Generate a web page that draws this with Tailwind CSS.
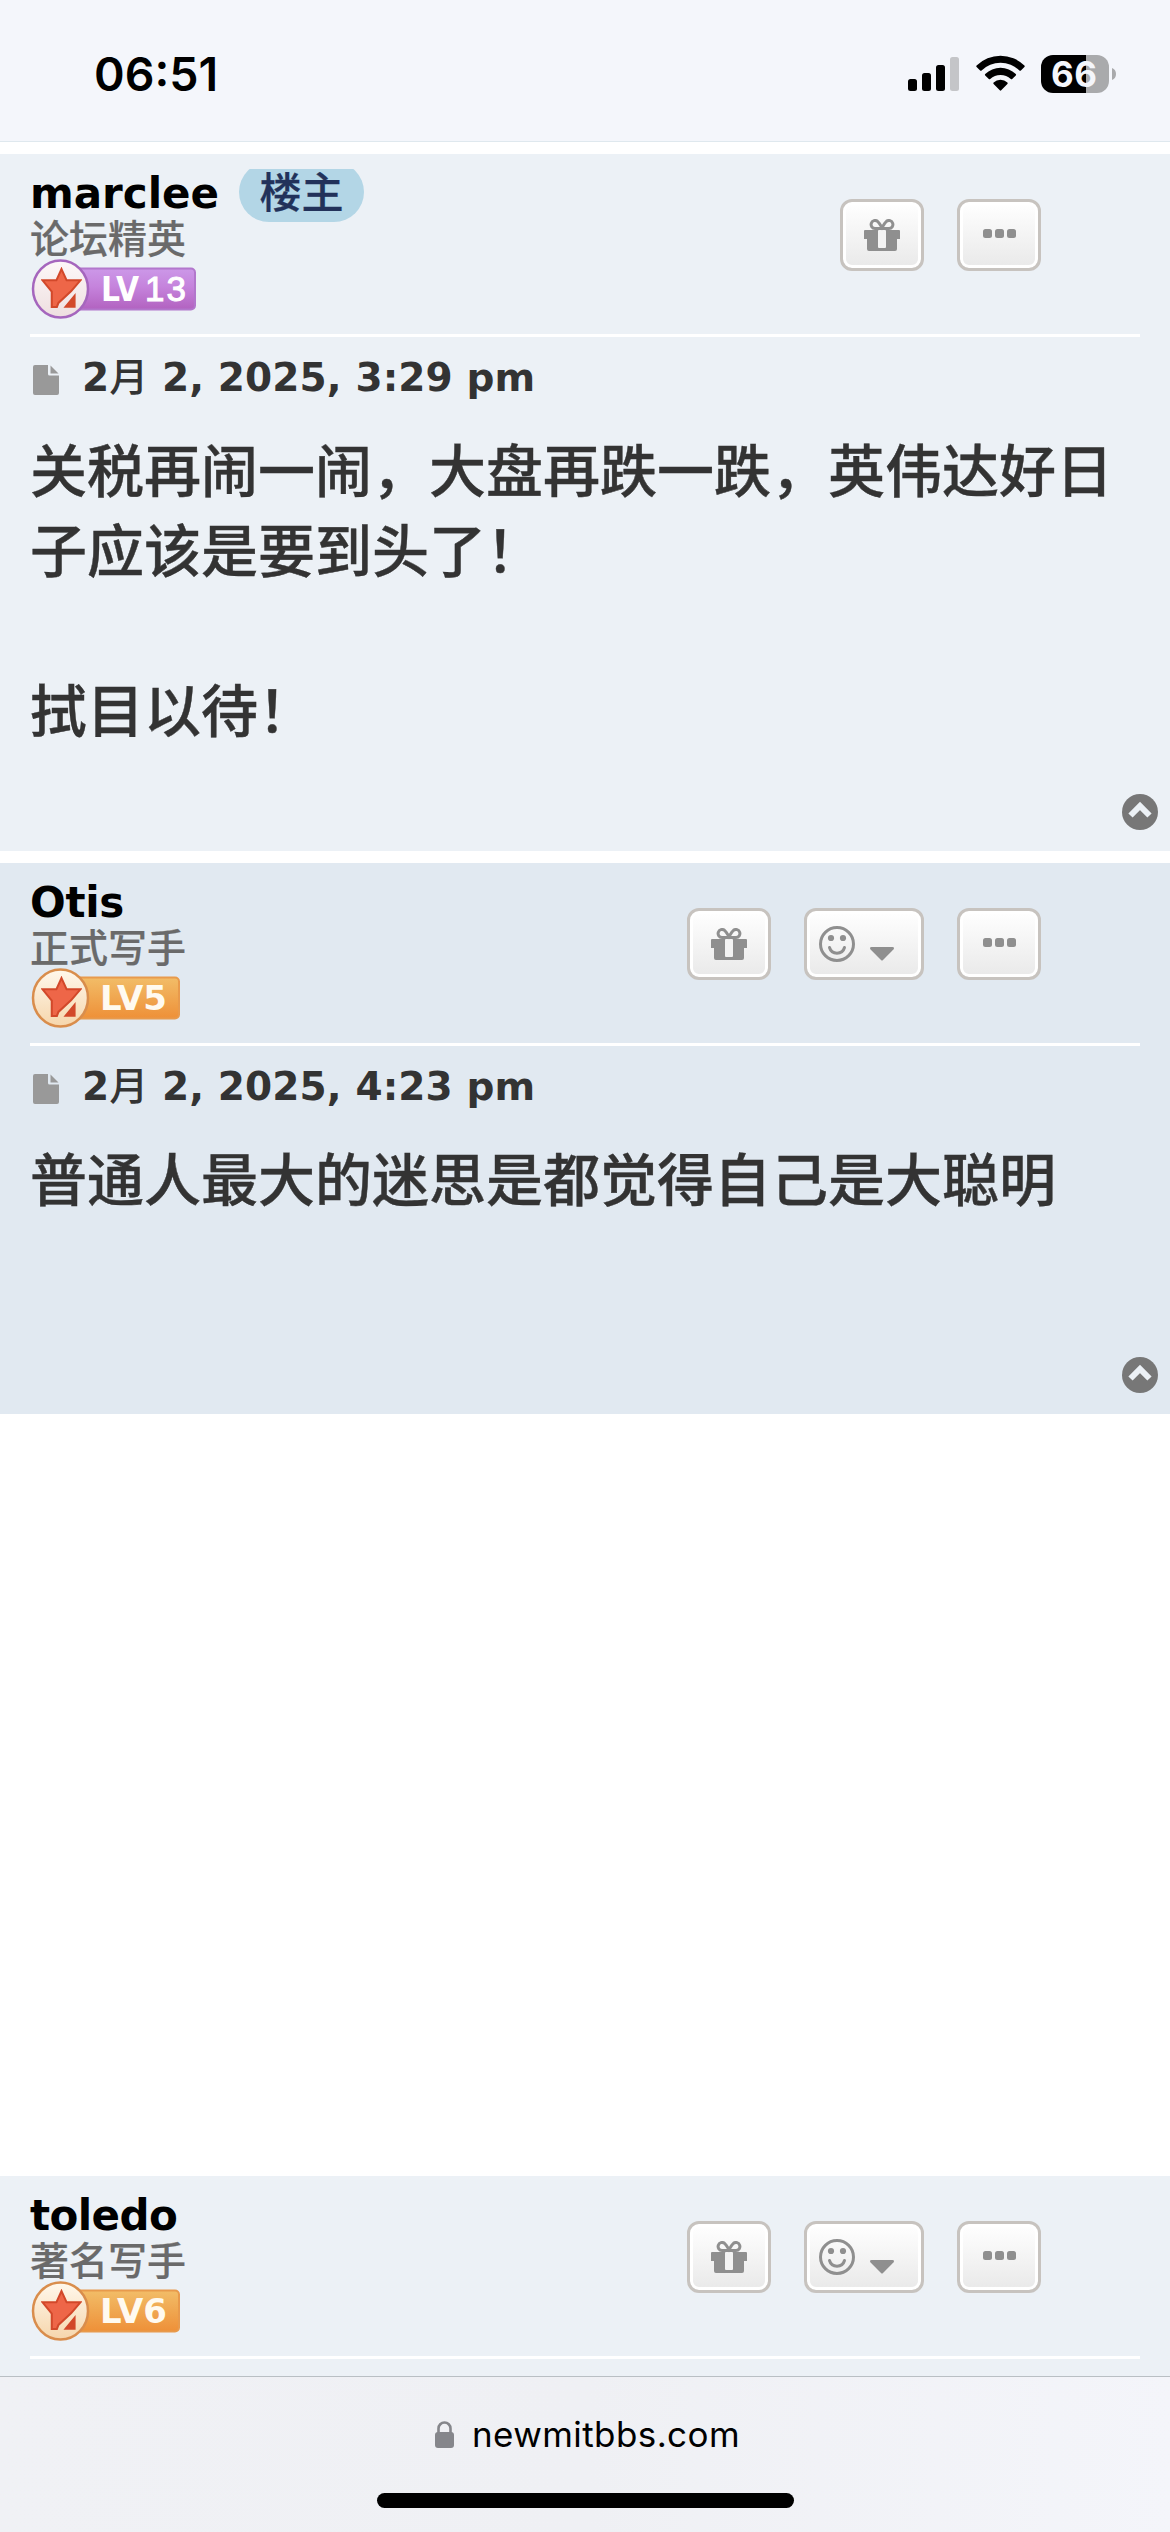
<!DOCTYPE html>
<html lang="zh-CN">
<head>
    <meta charset="utf-8">
    <title>newmitbbs.com</title>
    <script src="https://cdn.jsdelivr.net/npm/@tailwindcss/browser@4"></script>
</head>
<body class="bg-white w-[1170px] h-[2532px] overflow-hidden flex flex-col font-['DejaVu_Sans','Noto_Sans_CJK_SC',sans-serif]">
    <!-- shared icons -->
    <svg class="absolute size-0">
        <symbol id="gift" viewBox="0 0 36 32">
            <path fill="#8f8f8f" d="M1 11h34q1 0 1 1v8h-3v10q0 2-2 2H5q-2 0-2-2V20H0v-8q0-1 1-1z"/>
            <rect x="14" y="11" width="8" height="18" rx="1" fill="#f3f3f3"/>
            <path fill="none" stroke="#8f8f8f" stroke-width="3" d="M17.500 9.500H11a4 4 0 1 1 2.500-7.200Q15 3.500 18 8.500Q21 3.500 22.500 2.300A4 4 0 1 1 25 9.500h-7.500"/>
        </symbol>
        <symbol id="dots" viewBox="0 0 33 9">
            <g fill="#8f8f8f"><rect width="9" height="9" rx="2.500"/><rect x="12" width="9" height="9" rx="2.500"/><rect x="24" width="9" height="9" rx="2.500"/></g>
        </symbol>
        <symbol id="smile" viewBox="0 0 36 36">
            <circle cx="18" cy="18" r="16.500" fill="none" stroke="#8f8f8f" stroke-width="3"/>
            <circle cx="12" cy="12" r="3.100" fill="#8f8f8f"/><circle cx="24" cy="12" r="3.100" fill="#8f8f8f"/>
            <path d="M10.500 21.500a7.800 7.800 0 0 0 15 0" fill="none" stroke="#8f8f8f" stroke-width="3" stroke-linecap="round"/>
        </symbol>
        <symbol id="caret" viewBox="0 0 24 14">
            <path d="M1.500 0h21q2.500.4.900 2.400L13 13q-1 1-2 0L.6 2.400Q-1 .4 1.500 0z" fill="#8f8f8f"/>
        </symbol>
        <symbol id="file" viewBox="0 0 26 30">
            <path fill="#999" d="M2 0h13v9q0 1.500 1.500 1.500H26V28q0 2-2 2H2q-2 0-2-2V2q0-2 2-2zM17.500.500l8 8h-8z"/>
        </symbol>
        <symbol id="up" viewBox="0 0 36 36">
            <circle cx="18" cy="18" r="18" fill="#777"/>
            <path d="M8.500 21.500 18 12l9.500 9.500" fill="none" stroke="#ecf1f6" stroke-width="6"/>
        </symbol>
        <symbol id="star" viewBox="0 0 40 40">
            <path d="M20 2l5 11h13.500l-9 10.500L17 35l-1.500 4H10.500V24L1.500 13H15z" fill="#ee6648" stroke="#d2482a" stroke-width="2"/>
            <path d="M33 27.500V39h-9.500z" fill="#d2482a" stroke="#d2482a" stroke-width="1.500"/>
        </symbol>
        <linearGradient id="purple" x2="0" y2="1"><stop stop-color="#cc98e8"/><stop offset=".45" stop-color="#c583dc"/><stop offset="1" stop-color="#b262c0"/></linearGradient>
        <linearGradient id="orange" x2="0" y2="1"><stop stop-color="#f2bd68"/><stop offset="1" stop-color="#ee9038"/></linearGradient>
        <linearGradient id="disc1" x2="0" y2="1"><stop stop-color="#fdf8f8"/><stop offset="1" stop-color="#eedfe0"/></linearGradient>
        <linearGradient id="disc2" x2="0" y2="1"><stop stop-color="#fff8ec"/><stop offset="1" stop-color="#f6d6ac"/></linearGradient>
    </svg>

    <header class="h-[142px] shrink-0 bg-[#f4f6fb] border-b border-[#dfe8ee] flex items-start justify-between pl-[94px] pr-[54px]">
        <div class="mt-[46px] text-[46.500px] leading-[56px] font-semibold text-black font-['Inter',sans-serif]">06:51</div>
        <div class="mt-[55px] flex">
            <svg class="w-[52px] h-[38px] mr-4" viewBox="0 0 52 38">
                <rect y="24" width="9" height="12" rx="2.500"/><rect x="14" y="18" width="9" height="18" rx="2.500"/><rect x="28" y="10" width="9" height="26" rx="2.500"/>
                <rect x="42" y="2" width="9" height="34" rx="2.500" fill="#c4c5c8"/>
            </svg>
            <svg class="w-[49px] h-[38px] mr-4" viewBox="0 0 49 38">
                <path d="M.6 10.500a34 34 0 0 1 47.800 0q.8.800 0 1.500l-3.500 3.500q-.7.700-1.500 0a27 27 0 0 0-37.800 0q-.8.700-1.500 0L.6 12q-.8-.7 0-1.500z"/>
                <path d="M9.200 19a22 22 0 0 1 30.600 0q.7.700 0 1.400l-3.600 3.600q-.7.600-1.400 0a15 15 0 0 0-20.600 0q-.7.600-1.400 0l-3.600-3.600q-.7-.7 0-1.400z"/>
                <path d="M17.600 27.500a10 10 0 0 1 13.800 0q.7.700 0 1.400l-6.200 6.400q-.7.700-1.400 0l-6.200-6.400q-.7-.7 0-1.400z"/>
            </svg>
            <svg class="w-[75px] h-[38px] overflow-visible" viewBox="0 0 75 38">
                <path d="M45 0H56a12 12 0 0 1 12 12V26a12 12 0 0 1-12 12H45z" fill="#a9aaac"/>
                <path d="M45 0H12A12 12 0 0 0 0 12V26A12 12 0 0 0 12 38H45z"/>
                <path d="M71 13q4 1.500 4 6t-4 6z" fill="#a9aaac"/>
                <text x="10" y="31.500" font-size="35" font-weight="700" textLength="46" fill="#f4f6fb" class="font-['Inter',sans-serif]">66</text>
            </svg>
        </div>
    </header>

    <main class="flex-1 min-h-0 overflow-hidden pt-3 flex flex-col">
        <article class="h-[697px] shrink-0 bg-[#ecf1f6] pt-[15px] px-[30px] relative">
            <div class="h-[168px] border-b-[3px] border-white flex justify-between">
                <div>
                    <div class="flex h-[49px] overflow-hidden -mb-1 pb-1 box-content">
                        <a class="text-[42px] leading-[49px] font-bold text-black">marclee</a>
                        <span class="h-[60px] -mt-[7px] ml-[20px] px-[20.500px] rounded-full bg-[#b3d6e6] text-[#22325a] text-[42px] leading-[56px] font-medium font-['Noto_Sans_CJK_SC',sans-serif] [-webkit-text-stroke:0.3px_#22325a]">楼主</span>
                    </div>
                    <div class="h-[41px] text-[39px] leading-[37px] font-medium text-[#6a6a6a] font-['Noto_Sans_CJK_SC',sans-serif] [-webkit-text-stroke:0.2px_#6a6a6a]">论坛精英</div>
                    <svg class="w-[166px] h-[60px]" viewBox="0 0 166 60">
                        <rect x="40" y="9.500" width="125" height="41" rx="4" fill="url(#purple)" stroke="#b277cc" stroke-width="2"/>
                        <ellipse cx="30.500" cy="30" rx="27.500" ry="28.500" fill="url(#disc1)" stroke="#a566bd" stroke-width="2.500"/>
                        <use href="#star" x="11" y="8" width="41" height="41"/>
                        <text x="71" y="42" font-size="34" font-weight="700" textLength="38" lengthAdjust="spacingAndGlyphs" fill="#fff" class="font-['DejaVu_Sans',sans-serif]">LV</text>
                        <text x="115" y="42" font-size="35" textLength="41" stroke="#fff" fill="#fff" class="font-['Liberation_Sans',sans-serif]">13</text>
                    </svg>
                </div>
                <div class="flex gap-[33px] mt-[30px] mr-[99px]">
                    <button class="w-[84px] h-[72px] border-[3px] border-[#c7c3bf] rounded-xl bg-linear-to-b from-white to-[#e9e9e9] shadow-[inset_0_0_0_3px_#fff] flex justify-center pt-[17px]"><svg class="w-9 h-8"><use href="#gift"/></svg></button>
                    <button class="w-[84px] h-[72px] border-[3px] border-[#c7c3bf] rounded-xl bg-linear-to-b from-white to-[#e9e9e9] shadow-[inset_0_0_0_3px_#fff] flex justify-center pt-[27px]"><svg class="w-[33px] h-[9px]"><use href="#dots"/></svg></button>
                </div>
            </div>
            <div class="flex mt-[18px] h-[46px] pl-[3px] text-[39px] leading-[46px] font-bold text-[#333]">
                <svg class="w-[26px] h-[30px] mt-[10px] mr-[23px]"><use href="#file"/></svg>
                <p class="tracking-[0.1px]">2<span class="font-medium">月</span> 2, 2025, 3:29 pm</p>
            </div>
            <div class="mt-[26px] text-[57px] leading-[80px] font-medium text-[#333] font-['Noto_Sans_CJK_SC',sans-serif] [-webkit-text-stroke:0.4px_#333]">
                关税再闹一闹，大盘再跌一跌，英伟达好日子应该是要到头了！<br><br>拭目以待！
            </div>
            <svg class="absolute right-3 bottom-[21px] size-9"><use href="#up"/></svg>
        </article>

        <article class="h-[551px] shrink-0 mt-3 bg-[#e1e9f1] pt-[15px] px-[30px] relative">
            <div class="h-[168px] border-b-[3px] border-white flex justify-between">
                <div>
                    <a class="block h-[49px] text-[42px] leading-[49px] font-bold text-black tracking-[-0.3px]">Otis</a>
                    <div class="h-[41px] text-[39px] leading-[37px] font-medium text-[#6a6a6a] font-['Noto_Sans_CJK_SC',sans-serif] [-webkit-text-stroke:0.2px_#6a6a6a]">正式写手</div>
                    <svg class="w-[150px] h-[60px]" viewBox="0 0 150 60">
                        <rect x="40" y="9.500" width="109" height="41" rx="4" fill="url(#orange)" stroke="#e89a4c" stroke-width="2"/>
                        <ellipse cx="30.500" cy="30" rx="27.500" ry="28.500" fill="url(#disc2)" stroke="#d98d4c" stroke-width="2.500"/>
                        <use href="#star" x="11" y="8" width="41" height="41"/>
                        <text x="70" y="42" font-size="34" font-weight="700" textLength="67" lengthAdjust="spacingAndGlyphs" fill="#fffaf0" class="font-['DejaVu_Sans',sans-serif]">LV5</text>
                    </svg>
                </div>
                <div class="flex gap-[33px] mt-[30px] mr-[99px]">
                    <button class="w-[84px] h-[72px] border-[3px] border-[#c7c3bf] rounded-xl bg-linear-to-b from-white to-[#e9e9e9] shadow-[inset_0_0_0_3px_#fff] flex justify-center pt-[17px]"><svg class="w-9 h-8"><use href="#gift"/></svg></button>
                    <button class="w-[120px] h-[72px] border-[3px] border-[#c7c3bf] rounded-xl bg-linear-to-b from-white to-[#e9e9e9] shadow-[inset_0_0_0_3px_#fff] flex pl-3 pt-[15px] gap-[15px]"><svg class="size-9"><use href="#smile"/></svg><svg class="w-6 h-[14px] mt-[21px]"><use href="#caret"/></svg></button>
                    <button class="w-[84px] h-[72px] border-[3px] border-[#c7c3bf] rounded-xl bg-linear-to-b from-white to-[#e9e9e9] shadow-[inset_0_0_0_3px_#fff] flex justify-center pt-[27px]"><svg class="w-[33px] h-[9px]"><use href="#dots"/></svg></button>
                </div>
            </div>
            <div class="flex mt-[18px] h-[46px] pl-[3px] text-[39px] leading-[46px] font-bold text-[#333]">
                <svg class="w-[26px] h-[30px] mt-[10px] mr-[23px]"><use href="#file"/></svg>
                <p class="tracking-[0.1px]">2<span class="font-medium">月</span> 2, 2025, 4:23 pm</p>
            </div>
            <div class="mt-[26px] text-[57px] leading-[80px] font-medium text-[#333] font-['Noto_Sans_CJK_SC',sans-serif] [-webkit-text-stroke:0.4px_#333]">普通人最大的迷思是都觉得自己是大聪明</div>
            <svg class="absolute right-3 bottom-[21px] size-9"><use href="#up"/></svg>
        </article>

        <!-- empty ad slot between posts -->
        <div class="h-[762px] shrink-0"></div>

        <article class="h-[200px] shrink-0 bg-[#ecf1f6] pt-[15px] px-[30px]">
            <div class="h-[168px] border-b-[3px] border-white flex justify-between">
                <div>
                    <a class="block h-[49px] text-[42px] leading-[49px] font-bold text-black tracking-[-0.6px]">toledo</a>
                    <div class="h-[41px] text-[39px] leading-[37px] font-medium text-[#6a6a6a] font-['Noto_Sans_CJK_SC',sans-serif] [-webkit-text-stroke:0.2px_#6a6a6a]">著名写手</div>
                    <svg class="w-[150px] h-[60px]" viewBox="0 0 150 60">
                        <rect x="40" y="9.500" width="109" height="41" rx="4" fill="url(#orange)" stroke="#e89a4c" stroke-width="2"/>
                        <ellipse cx="30.500" cy="30" rx="27.500" ry="28.500" fill="url(#disc2)" stroke="#d98d4c" stroke-width="2.500"/>
                        <use href="#star" x="11" y="8" width="41" height="41"/>
                        <text x="70" y="42" font-size="34" font-weight="700" textLength="67" lengthAdjust="spacingAndGlyphs" fill="#fffaf0" class="font-['DejaVu_Sans',sans-serif]">LV6</text>
                    </svg>
                </div>
                <div class="flex gap-[33px] mt-[30px] mr-[99px]">
                    <button class="w-[84px] h-[72px] border-[3px] border-[#c7c3bf] rounded-xl bg-linear-to-b from-white to-[#e9e9e9] shadow-[inset_0_0_0_3px_#fff] flex justify-center pt-[17px]"><svg class="w-9 h-8"><use href="#gift"/></svg></button>
                    <button class="w-[120px] h-[72px] border-[3px] border-[#c7c3bf] rounded-xl bg-linear-to-b from-white to-[#e9e9e9] shadow-[inset_0_0_0_3px_#fff] flex pl-3 pt-[15px] gap-[15px]"><svg class="size-9"><use href="#smile"/></svg><svg class="w-6 h-[14px] mt-[21px]"><use href="#caret"/></svg></button>
                    <button class="w-[84px] h-[72px] border-[3px] border-[#c7c3bf] rounded-xl bg-linear-to-b from-white to-[#e9e9e9] shadow-[inset_0_0_0_3px_#fff] flex justify-center pt-[27px]"><svg class="w-[33px] h-[9px]"><use href="#dots"/></svg></button>
                </div>
            </div>
        </article>
    </main>

    <footer class="h-[156px] shrink-0 border-t border-[#b9bfc4] bg-linear-to-r from-[#f0f1f5] via-[#eff0f4] to-[#f4f5fa] flex flex-col items-center">
        <div class="flex mt-[34px] h-[46px] pl-[5px]">
            <svg class="w-[19px] h-[27px] mt-[10px] mr-[18px]" viewBox="0 0 19 27">
                <rect y="11" width="19" height="16" rx="3" fill="#85868b"/>
                <path d="M3.500 13V7.500a6 6 0 0 1 12 0V13" fill="none" stroke="#85868b" stroke-width="2.600"/>
            </svg>
            <span class="text-[35px] leading-[46px] tracking-[0.4px] text-black font-['Inter',sans-serif]">newmitbbs.com</span>
        </div>
        <div class="mt-9 w-[417px] h-[15px] rounded-full bg-black"></div>
    </footer>
</body>
</html>
